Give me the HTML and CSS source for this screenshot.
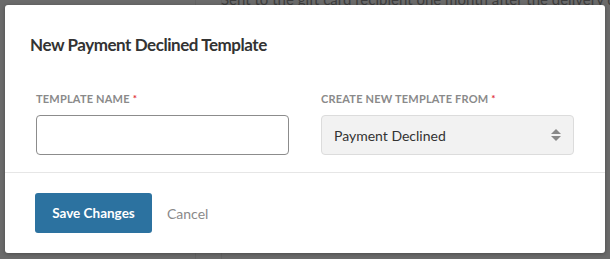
FILE: index.html
```html
<!DOCTYPE html>
<html lang="en">
<head>
    <meta charset="UTF-8">
    <meta name="viewport" content="width=device-width, initial-scale=1.0">
    <title>New Payment Declined Template</title>
    <link rel="stylesheet" href="styles.css">
</head>
<body>
    <!-- page behind the overlay -->
    <div class="page-behind">
        <div class="rule rule-a"></div>
        <div class="rule rule-b"></div>
        <p class="behind-text">Sent to the gift card recipient one month after the delivery date if</p>
    </div>

    <div class="modal">
        <div class="modal-header">
            <h2>New Payment Declined Template</h2>
        </div>

        <form class="modal-body">
            <div class="field">
                <label for="template-name">Template Name<span class="req">*</span></label>
                <input type="text" id="template-name" name="template-name">
            </div>
            <div class="field">
                <label for="template-from">Create New Template From<span class="req">*</span></label>
                <div class="select-wrap">
                    <select id="template-from" name="template-from">
                        <option>Payment Declined</option>
                    </select>
                    <span class="arrows"><i class="up"></i><i class="down"></i></span>
                </div>
            </div>
        </form>

        <div class="modal-footer">
            <button type="button" class="btn-save">Save Changes</button>
            <a href="#" class="btn-cancel">Cancel</a>
        </div>
    </div>
</body>
</html>
```

FILE: styles.css
```css
body {
    margin: 0;
    padding: 0;
    font-family: 'Lato', 'Open Sans', sans-serif;
    background-color: #6b6b6b;
    height: 259px;
    overflow: hidden;
    position: relative;
}

.page-behind {
    position: relative;
    height: 259px;
}

.rule {
    position: absolute;
    top: 0;
    bottom: 0;
    width: 1px;
    background-color: #646464;
}

.rule-a { left: 195px; }
.rule-b { left: 221px; }

.behind-text {
    margin: 0;
    padding-left: 221px;
    position: relative;
    top: -10px;
    font-size: 15px;
    color: #3e3e3e;
    white-space: nowrap;
}

.modal {
    position: absolute;
    top: 5px;
    left: 5px;
    width: 600px;
    height: 248px;
    background-color: #fff;
    border-radius: 3px;
    box-shadow: 0 1px 4px rgba(0, 0, 0, 0.3);
    display: flex;
    flex-direction: column;
}

.modal-header {
    padding: 28px 25px 0;
}

.modal-header h2 {
    margin: 0;
    font-size: 17px;
    line-height: 24px;
    font-weight: 700;
    letter-spacing: -0.45px;
    color: #333;
}

.modal-body {
    display: grid;
    grid-template-columns: 1fr 1fr;
    column-gap: 32px;
    padding: 35px 31px 17px;
    border-bottom: 1px solid #e6e6e6;
}

.field label {
    display: block;
    font-size: 11px;
    line-height: 14px;
    font-weight: 700;
    letter-spacing: 0.2px;
    text-transform: uppercase;
    color: #8a8a8a;
    margin-bottom: 9px;
}

.req {
    color: #e0303a;
    margin-left: 3px;
    position: relative;
    top: -1px;
    font-size: 10px;
}

.field input {
    display: block;
    width: 100%;
    height: 40px;
    box-sizing: border-box;
    border: 1px solid #8c8c8c;
    border-radius: 4px;
    background-color: #fff;
}

.select-wrap {
    position: relative;
}

.select-wrap select {
    display: block;
    width: 100%;
    height: 40px;
    box-sizing: border-box;
    appearance: none;
    -webkit-appearance: none;
    border: 1px solid #dcdcdc;
    border-radius: 4px;
    background-color: #f2f2f2;
    padding: 0 12px;
    font-family: inherit;
    font-size: 14px;
    color: #333;
}

.arrows {
    position: absolute;
    right: 13px;
    top: 14px;
    display: flex;
    flex-direction: column;
    gap: 2px;
    pointer-events: none;
}

.arrows i {
    display: block;
    width: 0;
    height: 0;
    border-left: 5px solid transparent;
    border-right: 5px solid transparent;
}

.arrows .up { border-bottom: 5px solid #888; }
.arrows .down { border-top: 5px solid #888; }

.modal-footer {
    display: flex;
    align-items: center;
    gap: 15px;
    padding: 20px 30px;
}

.btn-save {
    width: 117px;
    height: 40px;
    border: none;
    border-radius: 3px;
    background-color: #2c72a0;
    color: #fff;
    font-family: inherit;
    font-size: 13.5px;
    font-weight: 700;
    cursor: pointer;
}

.btn-cancel {
    font-size: 14px;
    color: #8a8a8a;
    text-decoration: none;
}
```
